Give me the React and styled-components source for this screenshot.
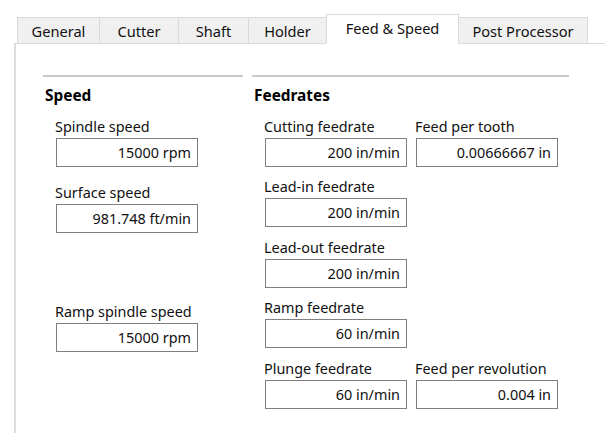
import React from 'react';
import styled, { createGlobalStyle } from 'styled-components';

const GlobalStyle = createGlobalStyle`
    html, body {
        margin: 0;
        padding: 0;
        background: #ffffff;
        overflow: hidden;
    }
    body {
        font-family: "Noto Sans", "Open Sans", sans-serif;
        font-size: 14.4px;
        color: #111;
    }
`;

const Window = styled.div`
    width: 605px;
    height: 433px;
    padding: 15px 0 0 14px;
    box-sizing: border-box;
    overflow: hidden;
`;

const TabBar = styled.div`
    display: flex;
    align-items: flex-end;
    padding-left: 3px;
    height: 29px;
    position: relative;
    z-index: 1;
`;

const Tab = styled.div`
    box-sizing: border-box;
    width: ${p => p.$width}px;
    height: ${p => (p.$active ? 30 : 27)}px;
    margin-left: ${p => (p.$first ? 0 : -1)}px;
    display: flex;
    align-items: center;
    justify-content: center;
    padding-bottom: ${p => (p.$active ? 3 : 0)}px;
    background: ${p => (p.$active ? '#ffffff' : '#f0f0f0')};
    border: 1px solid #d9d9d9;
    border-bottom: ${p => (p.$active ? '1px solid #ffffff' : '1px solid #d9d9d9')};
    font-size: 14.6px;
    color: #111;
    white-space: nowrap;
`;

const Panel = styled.div`
    margin-top: -1px;
    height: 390px;
    box-sizing: border-box;
    border-top: 1px solid #d9d9d9;
    border-left: 2px solid #dcdcdc;
    padding: 31px 0 0 27px;
    display: flex;
    gap: 9px;
    align-items: flex-start;
`;

const Group = styled.div`
    width: ${p => p.$width}px;
    border-top: 2px solid #c9c9c9;
    padding: 10px 0 0 0;
`;

const GroupTitle = styled.div`
    font-weight: bold;
    font-size: 15.4px;
    line-height: 18px;
    padding-left: 2px;
    color: #000;
`;

const Column = styled.div`
    display: flex;
    flex-direction: column;
    gap: ${p => p.$gap}px;
    padding: 12.5px 0 0 12px;
`;

const Row = styled.div`
    display: flex;
    gap: 8px;
`;

const Field = styled.div`
    display: flex;
    flex-direction: column;
    gap: 2px;
    margin-top: ${p => p.$push || 0}px;
`;

const Label = styled.div`
    line-height: 18px;
    white-space: nowrap;
`;

const ValueBox = styled.div`
    box-sizing: border-box;
    width: 142px;
    height: 29px;
    border: 1px solid #7f7f7f;
    padding: 1px 6px 0 0;
    line-height: 26px;
    text-align: right;
    background: #ffffff;
    white-space: nowrap;
    margin-left: 1px;
`;

const tabs = [
    { name: 'General', width: 83 },
    { name: 'Cutter', width: 80 },
    { name: 'Shaft', width: 71 },
    { name: 'Holder', width: 79 },
    { name: 'Feed & Speed', width: 133, active: true },
    { name: 'Post Processor', width: 130 },
];

function InputField({ label, value, push }) {
    return (
        <Field $push={push}>
            <Label>{label}</Label>
            <ValueBox>{value}</ValueBox>
        </Field>
    );
}

export default function App() {
    return (
        <Window>
            <GlobalStyle />
            <TabBar>
                {tabs.map((t, i) => (
                    <Tab key={t.name} $width={t.width} $active={t.active} $first={i === 0}>
                        {t.name}
                    </Tab>
                ))}
            </TabBar>
            <Panel>
                <Group $width={200}>
                    <GroupTitle>Speed</GroupTitle>
                    <Column $gap={17}>
                        <InputField label="Spindle speed" value="15000 rpm" />
                        <InputField label="Surface speed" value="981.748 ft/min" />
                        <InputField label="Ramp spindle speed" value="15000 rpm" push={53} />
                    </Column>
                </Group>
                <Group $width={317}>
                    <GroupTitle>Feedrates</GroupTitle>
                    <Column $gap={11.5}>
                        <Row>
                            <InputField label="Cutting feedrate" value="200 in/min" />
                            <InputField label="Feed per tooth" value="0.00666667 in" />
                        </Row>
                        <InputField label="Lead-in feedrate" value="200 in/min" />
                        <InputField label="Lead-out feedrate" value="200 in/min" />
                        <InputField label="Ramp feedrate" value="60 in/min" />
                        <Row>
                            <InputField label="Plunge feedrate" value="60 in/min" />
                            <InputField label="Feed per revolution" value="0.004 in" />
                        </Row>
                    </Column>
                </Group>
            </Panel>
        </Window>
    );
}
